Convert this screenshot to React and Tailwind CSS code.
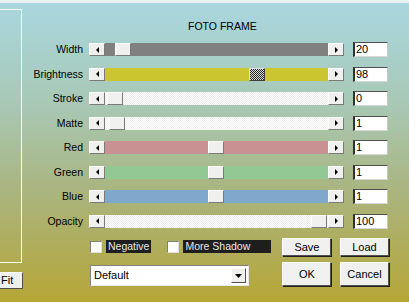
import React from "react";

const font = { fontFamily: '"Liberation Sans", Arial, sans-serif' };

function Tri({ dir }) {
  const pts = dir === "left" ? "3,0 3,6 0,3" : dir === "right" ? "0,0 0,6 3,3" : "0,0 7,0 3.5,4";
  const w = dir === "down" ? 7 : 3;
  const h = dir === "down" ? 4 : 6;
  return (
    <svg width={w} height={h} viewBox={`0 0 ${w} ${h}`}>
      <polygon points={pts} fill="#000" />
    </svg>
  );
}

function ArrowBtn({ dir }) {
  return (
    <div className="w-[16px] h-[13px] shrink-0 flex items-center justify-center bg-[#f0f0ee] border border-t-white border-l-white border-r-[#7a7a7a] border-b-[#7a7a7a]">
      <Tri dir={dir} />
    </div>
  );
}

const rows = [
  { label: "Width", h: "h-[25px]", track: "bg-[#808080]", thumb: "left-[10px]", val: "20" },
  { label: "Brightness", h: "h-[24px]", track: "bg-[#cbc630]", thumb: "left-[144px]", val: "98", checker: true },
  { label: "Stroke", h: "h-[25px]", track: "bg-[repeating-conic-gradient(#ffffff_0%_25%,#ebebeb_0%_50%)] bg-[length:2px_2px]", thumb: "left-[2px]", val: "0" },
  { label: "Matte", h: "h-[24px]", track: "bg-[repeating-conic-gradient(#ffffff_0%_25%,#efefef_0%_50%)] bg-[length:2px_2px]", thumb: "left-[4px]", val: "1" },
  { label: "Red", h: "h-[25px]", track: "bg-[#c99192]", thumb: "left-[103px]", val: "1" },
  { label: "Green", h: "h-[24px]", track: "bg-[#92c894]", thumb: "left-[103px]", val: "1" },
  { label: "Blue", h: "h-[25px]", track: "bg-[#80a8cc]", thumb: "left-[103px]", val: "1" },
  { label: "Opacity", h: "h-[24px]", track: "bg-[repeating-conic-gradient(#ffffff_0%_25%,#ebebeb_0%_50%)] bg-[length:2px_2px]", thumb: "left-[206px]", val: "100" },
];

function Row({ r }) {
  return (
    <div className={`${r.h} flex items-center`}>
      <div className="w-[60px] text-right text-[10.5px] text-black leading-none">{r.label}</div>
      <div className="w-[6px]" />
      <ArrowBtn dir="left" />
      <div className={`relative w-[223px] h-[13px] ${r.track}`}>
        {r.checker ? (
          <div className={`absolute top-0 ${r.thumb} w-[16px] h-[13px] border border-t-[#e0e0e0] border-l-[#e0e0e0] border-r-[#404040] border-b-[#404040] bg-[repeating-conic-gradient(#2a2a2a_0%_25%,#d8d8d8_0%_50%)] bg-[length:2px_2px]`} />
        ) : (
          <div className={`absolute top-0 ${r.thumb} w-[16px] h-[13px] bg-[#f0f0ee] border border-t-white border-l-white border-r-[#7a7a7a] border-b-[#7a7a7a]`} />
        )}
      </div>
      <ArrowBtn dir="right" />
      <div className="w-[9px]" />
      <div className="w-[35px] h-[15px] bg-white border border-t-[#505050] border-l-[#303030] border-l-2 border-r-[#c8c8c8] border-b-[#d8d8d8] text-[11px] leading-[13px] pl-[1px] text-black">
        {r.val}
      </div>
    </div>
  );
}

function Btn({ children, cls }) {
  return (
    <div className={`${cls} flex items-center justify-center bg-[#f0f0ee] border border-t-white border-l-white border-r-[#505050] border-b-[#505050] shadow-[1px_1px_0_#202020] text-[11px] text-black`}>
      {children}
    </div>
  );
}

export default function App() {
  return (
    <div
      style={font}
      className="w-[409px] h-[302px] overflow-hidden flex flex-col bg-[linear-gradient(180deg,#a9d7e1_0%,#a8c8b4_35%,#aab47c_65%,#b6a636_100%)]"
    >
      <div className="h-[3px] bg-[#e8f0f0] shrink-0" />
      <div className="flex flex-1">
        {/* left column */}
        <div className="w-[23px] shrink-0 flex flex-col">
          <div className="mt-[6px] h-[254px] w-[22px] border-t border-r border-b border-white" />
          <div className="mt-[9px] -ml-[3px] w-[26px] h-[17px] flex items-center pl-[3px] bg-[#f0f0ee] border border-t-white border-l-white border-r-[#505050] border-b-[#505050] text-[11px] text-black">
            Fit
          </div>
        </div>
        {/* right content */}
        <div className="flex-1 flex flex-col">
          <div className="h-[34px] pt-[17px] pl-[165px] text-[10.5px] leading-[13px] text-black">FOTO FRAME</div>
          {rows.map((r) => (
            <Row key={r.label} r={r} />
          ))}
          <div className="flex mt-[5px]">
            <div className="flex flex-col pl-[67px]">
              <div className="mt-[2px] flex items-center h-[13px]">
                <div className="w-[12px] h-[12px] bg-white border border-t-[#808080] border-l-[#808080] border-r-[#e0e0e0] border-b-[#e0e0e0]" />
                <div className="ml-[4px] h-[13px] px-[2px] bg-[#1e1e1e] text-[#e8e8e8] text-[10.5px] leading-[13px]">Negative</div>
                <div className="ml-[16px] w-[12px] h-[12px] bg-white border border-t-[#808080] border-l-[#808080] border-r-[#e0e0e0] border-b-[#e0e0e0]" />
                <div className="ml-[4px] w-[88px] h-[13px] px-[2px] bg-[#1e1e1e] text-[#e8e8e8] text-[10.5px] leading-[13px]">More Shadow</div>
              </div>
              <div className="mt-[12px] w-[159px] h-[21px] flex items-center bg-white border border-t-[#808080] border-l-[#808080] border-r-[#e8e8e8] border-b-[#e8e8e8]">
                <div className="flex-1 pl-[3px] text-[11px] text-black">Default</div>
                <div className="w-[15px] h-[15px] mr-[2px] flex items-center justify-center bg-[#f0f0ee] border border-t-white border-l-white border-r-[#505050] border-b-[#505050]">
                  <Tri dir="down" />
                </div>
              </div>
            </div>
            <div className="ml-[11px] grid grid-cols-2 gap-x-[8px] gap-y-[6px] w-[107px]">
              <Btn cls="h-[18px] w-[49px]">Save</Btn>
              <Btn cls="h-[18px] w-[49px]">Load</Btn>
              <Btn cls="h-[24px] w-[49px]">OK</Btn>
              <Btn cls="h-[24px] w-[49px]">Cancel</Btn>
            </div>
          </div>
        </div>
      </div>
    </div>
  );
}
